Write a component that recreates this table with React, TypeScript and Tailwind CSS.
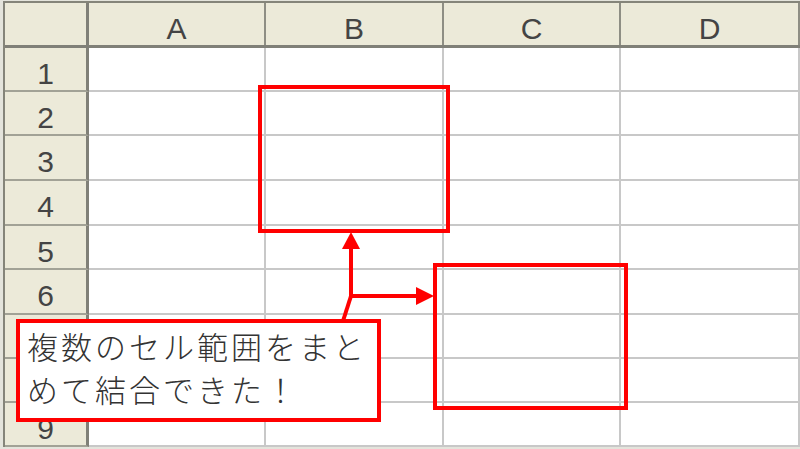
import React from "react";

const cols = [
  { label: "A", w: "w-[177px]" },
  { label: "B", w: "w-[178px]" },
  { label: "C", w: "w-[177px]" },
  { label: "D", w: "w-[179px]" },
];

// rows 7 and 8 sit under the callout, so their numbers are never seen
const rows = [
  { n: 1, h: "h-[44px]", hidden: false },
  { n: 2, h: "h-[44px]", hidden: false },
  { n: 3, h: "h-[45px]", hidden: false },
  { n: 4, h: "h-[45px]", hidden: false },
  { n: 5, h: "h-[44px]", hidden: false },
  { n: 6, h: "h-[45px]", hidden: false },
  { n: 7, h: "h-[44px]", hidden: true },
  { n: 8, h: "h-[44px]", hidden: true },
  { n: 9, h: "h-[44px]", hidden: false },
];

const numFont = { fontFamily: '"Liberation Sans", Arial, sans-serif' };

export default function App() {
  return (
    <div className="relative w-[800px] h-[449px] overflow-hidden bg-[#e4e4dc]">
      {/* Sheet grid */}
      <div className="ml-[3px] mt-[1px] flex flex-col border-l-2 border-t-2 border-[#85857a] bg-white">
        {/* Column headers */}
        <div className="flex h-[45px] border-b-[3px] border-[#808078]">
          <div className="w-[84px] bg-[#ecead9] border-r-[3px] border-[#808078]" />
          {cols.map((c) => (
            <div
              key={c.label}
              className={`${c.w} flex items-center justify-center bg-[#ecead9] border-r-2 border-[#8e8e84] text-[30px] text-[#444]`}
              style={numFont}
            >
              <span className="pt-[9px] leading-none">{c.label}</span>
            </div>
          ))}
        </div>

        {/* Rows */}
        {rows.map((r) => (
          <div key={r.n} className={`flex ${r.h}`}>
            <div
              className="w-[84px] flex items-center justify-center bg-[#ecead9] border-r-[3px] border-b-2 border-r-[#808078] border-b-[#a2a296] text-[30px] text-[#444]"
              style={numFont}
            >
              {!r.hidden && <span className="pt-[9px] leading-none">{r.n}</span>}
            </div>
            {cols.map((c) => (
              <div
                key={c.label}
                className={`${c.w} border-r-2 border-b-2 border-[#c8c8c8] bg-white`}
              />
            ))}
          </div>
        ))}
      </div>

      {/* Merged range outlines */}
      <div className="absolute left-[258px] top-[85px] w-[192px] h-[148px] border-4 border-[#ff0000]" />
      <div className="absolute left-[433px] top-[263px] w-[195px] h-[147px] border-4 border-[#ff0000]" />

      {/* Arrows */}
      <svg
        className="absolute left-0 top-0 pointer-events-none"
        width="800"
        height="449"
        viewBox="0 0 800 449"
      >
        <g stroke="#ff0000" strokeWidth="4" fill="none">
          <line x1="343" y1="321" x2="351" y2="296" />
          <line x1="351" y1="298" x2="351" y2="246" />
          <line x1="349" y1="296" x2="418" y2="296" />
        </g>
        <polygon points="351,232 342,249 360,249" fill="#ff0000" />
        <polygon points="434,296 416,287 416,305" fill="#ff0000" />
      </svg>

      {/* Callout */}
      <div
        className="absolute left-[16px] top-[319px] w-[365px] h-[103px] border-4 border-[#ff0000] bg-white pl-[7px] pt-[1px] whitespace-nowrap text-[31px] font-light leading-[43px] tracking-[3px] text-[#333]"
        style={{ fontFamily: '"Noto Sans CJK JP", "Noto Sans", sans-serif' }}
      >
        複数のセル範囲をまと
        <br />
        めて結合できた！
      </div>
    </div>
  );
}
